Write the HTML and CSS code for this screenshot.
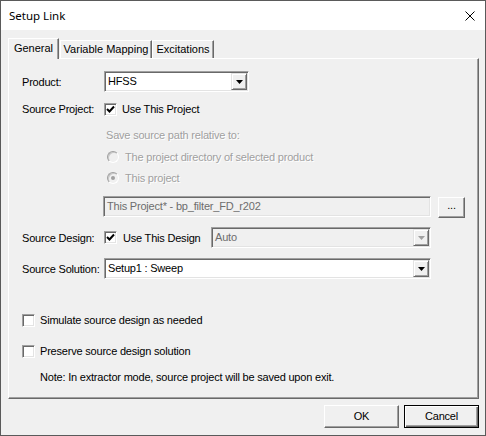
FILE: index.html
```html
<!DOCTYPE html>
<html lang="en">
<head>
  <meta charset="UTF-8">
  <title>Setup Link</title>
  <link rel="stylesheet" href="styles.css">
</head>
<body>
  <div class="window">
    <div class="titlebar">
      <span class="title">Setup Link</span>
      <svg class="close" width="10" height="10" viewBox="0 0 10 10"><path d="M0.5 0.5L9.5 9.5M9.5 0.5L0.5 9.5" stroke="#000" stroke-width="1" fill="none"/></svg>
    </div>
    <div class="client">
      <div class="tabs">
        <div class="tab active t-general">General</div>
        <div class="tab t-vars">Variable Mapping</div>
        <div class="tab t-exc">Excitations</div>
      </div>
      <div class="panel">
        <div class="row r-product">
          <span class="label">Product:</span>
          <div class="combo w-product">
            <span class="value">HFSS</span>
            <span class="drop"><svg width="7" height="4" viewBox="0 0 7 4"><polygon points="0,0 7,0 3.5,4" fill="#000"/></svg></span>
          </div>
        </div>
        <div class="row r-project">
          <span class="label">Source Project:</span>
          <span class="check checked"><svg width="9" height="9" viewBox="0 0 9 9"><polyline points="1,4 3.5,6.5 8,1.5" fill="none" stroke="#000" stroke-width="2"/></svg></span>
          <span class="check-text">Use This Project</span>
        </div>
        <div class="row r-save indent-save">
          <span class="disabled">Save source path relative to:</span>
        </div>
        <div class="row r-radio1 indent-radio">
          <span class="radio"></span>
          <span class="disabled radio-text">The project directory of selected product</span>
        </div>
        <div class="row r-radio2 indent-radio">
          <span class="radio on"><span class="dot"></span></span>
          <span class="disabled radio-text">This project</span>
        </div>
        <div class="row r-path indent-path">
          <div class="field w-path">This Project* - bp_filter_FD_r202</div>
          <div class="small-btn">...</div>
        </div>
        <div class="row r-design">
          <span class="label">Source Design:</span>
          <span class="check-group">
            <span class="check checked"><svg width="9" height="9" viewBox="0 0 9 9"><polyline points="1,4 3.5,6.5 8,1.5" fill="none" stroke="#000" stroke-width="2"/></svg></span>
            <span class="check-text">Use This Design</span>
          </span>
          <div class="combo off w-design">
            <span class="value">Auto</span>
            <span class="drop"><svg width="7" height="4" viewBox="0 0 7 4"><polygon points="0,0 7,0 3.5,4" fill="#a0a0a0"/></svg></span>
          </div>
        </div>
        <div class="row r-solution">
          <span class="label">Source Solution:</span>
          <div class="combo w-solution">
            <span class="value">Setup1 : Sweep</span>
            <span class="drop"><svg width="7" height="4" viewBox="0 0 7 4"><polygon points="0,0 7,0 3.5,4" fill="#000"/></svg></span>
          </div>
        </div>
        <div class="row r-simulate">
          <span class="check"></span>
          <span class="check-text wide">Simulate source design as needed</span>
        </div>
        <div class="row r-preserve">
          <span class="check"></span>
          <span class="check-text wide">Preserve source design solution</span>
        </div>
        <div class="row r-note">
          <span class="note">Note: In extractor mode, source project will be saved upon exit.</span>
        </div>
      </div>
      <div class="buttons">
        <div class="btn">OK</div>
        <div class="btn default">Cancel</div>
      </div>
    </div>
  </div>
</body>
</html>
```

FILE: styles.css
```css
body { margin: 0; background: #f0f0f0; font-family: "Liberation Sans", Arial, sans-serif; font-size: 11px; letter-spacing: -0.2px; color: #000; }
.window { width: 484px; height: 434px; border: 1px solid #5a5a5a; background: #f0f0f0; display: flex; flex-direction: column; }

/* title bar */
.titlebar { height: 29px; flex: none; background: #fff; display: flex; align-items: center; justify-content: space-between; padding: 0 10px 0 8px; }
.title { font-family: "Noto Sans", "Open Sans", sans-serif; font-size: 11.5px; letter-spacing: 0; }
.close { margin-top: 1px; }

.client { flex: 1; padding: 8px 7px 0 7px; }

/* tabs */
.tabs { display: flex; align-items: flex-end; height: 21px; margin-bottom: -1px; position: relative; z-index: 1; }
.tab { box-sizing: border-box; height: 18px; margin-bottom: 1px; border: 1px solid; border-color: #fff #696969 transparent #fff; border-bottom: none; box-shadow: inset -1px 0 #a0a0a0; text-align: center; line-height: 17px; background: #f0f0f0; letter-spacing: 0; }
.tab.active { height: 21px; margin-bottom: 0; line-height: 19px; }
.t-general { width: 51px; }
.t-vars { width: 92px; margin-left: 1px; }
.t-exc { width: 62px; }

/* tab panel */
.panel { box-sizing: border-box; width: 471px; height: 341px; border: 1px solid; border-color: #fff #696969 #696969 #fff; box-shadow: inset -1px -1px #a0a0a0; padding: 12px 0 0 13px; }
.row { display: flex; align-items: center; height: 20px; }
.label { width: 82px; flex: none; }
.r-product { height: 21px; }
.r-project { margin-top: 7px; }
.r-save { margin-top: 6px; }
.r-radio1 { margin-top: 2px; }
.r-radio2 { margin-top: 1px; }
.r-path { margin-top: 8px; height: 21px; }
.r-design { margin-top: 10px; height: 21px; }
.r-solution { margin-top: 10px; height: 21px; }
.r-simulate { margin-top: 31px; }
.r-preserve { margin-top: 11px; }
.r-note { margin-top: 6px; }
.indent-save { padding-left: 84px; }
.indent-radio { padding-left: 85px; }
.indent-path { padding-left: 81px; }

.disabled { color: #a0a0a0; text-shadow: 1px 1px #fff; }

/* combo boxes and fields */
.combo, .field { box-sizing: border-box; height: 21px; display: flex; align-items: stretch; border: 1px solid; border-color: #a0a0a0 #fff #fff #a0a0a0; box-shadow: inset 1px 1px #696969, inset -1px -1px #e3e3e3; background: #fff; }
.combo .value { flex: 1; padding-left: 3px; line-height: 19px; }
.combo.off { background: #f0f0f0; color: #6d6d6d; }
.drop { box-sizing: border-box; width: 16px; margin: 1px 1px 1px 0; border: 1px solid; border-color: #e3e3e3 #696969 #696969 #e3e3e3; box-shadow: inset 1px 1px #fff, inset -1px -1px #a0a0a0; background: #f0f0f0; display: flex; align-items: center; justify-content: center; }
.drop svg { margin-top: 1px; }
.w-product { width: 145px; }
.w-design { width: 220px; }
.w-solution { width: 327px; }
.field { background: #f0f0f0; color: #6d6d6d; padding-left: 3px; line-height: 19px; display: block; }
.w-path { width: 328px; }
.small-btn { box-sizing: border-box; width: 27px; height: 21px; margin-left: 7px; margin-top: 2px; border: 1px solid; border-color: #fff #696969 #696969 #fff; box-shadow: inset -1px -1px #a0a0a0; text-align: center; line-height: 15px; }

/* checkboxes and radios */
.check { box-sizing: border-box; width: 13px; height: 13px; flex: none; background: #fff; border: 1px solid; border-color: #a0a0a0 #fff #fff #a0a0a0; box-shadow: inset 1px 1px #696969, inset -1px -1px #e3e3e3; display: flex; align-items: center; justify-content: center; }
.check-text { margin-left: 5px; }
.check-group { width: 107px; display: flex; align-items: center; flex: none; }
.r-design .check-text { margin-left: 6px; }
.radio { box-sizing: border-box; width: 12px; height: 12px; flex: none; border-radius: 50%; border: 1px solid; border-color: #a0a0a0 #fff #fff #a0a0a0; box-shadow: inset 1px 1px #c8c8c8; background: #f0f0f0; display: flex; align-items: center; justify-content: center; }
.radio .dot { width: 4px; height: 4px; border-radius: 50%; background: #a0a0a0; }
.radio-text { margin-left: 6px; }
.note { padding-left: 18px; }

/* dialog buttons */
.buttons { display: flex; justify-content: flex-end; gap: 5px; margin-top: 6px; width: 471px; }
.btn { box-sizing: border-box; width: 75px; height: 23px; border: 1px solid; border-color: #fff #696969 #696969 #fff; box-shadow: inset -1px -1px #a0a0a0; text-align: center; line-height: 21px; }
.btn.default { border-color: #000; box-shadow: inset 1px 1px #fff, inset -1px -1px #696969, inset -2px -2px #a0a0a0; }
```
